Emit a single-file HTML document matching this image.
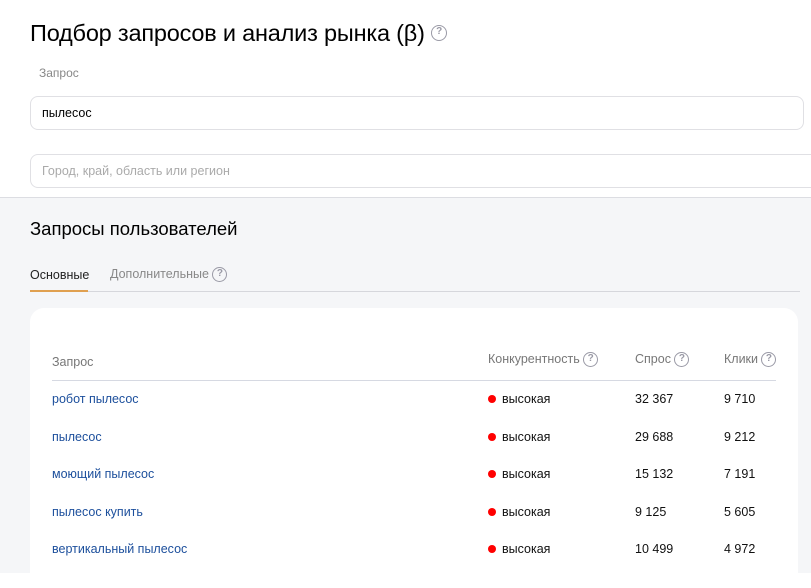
<!DOCTYPE html>
<html><head><meta charset="utf-8"><style>
*{box-sizing:border-box;margin:0;padding:0}
body{width:811px;height:573px;overflow:hidden;background:#fff;font-family:"Liberation Sans",sans-serif;color:#000;position:relative}
.abs{position:absolute;white-space:nowrap}
.q{display:inline-block;width:15px;height:15px;border:1.5px solid #9a9aa6;border-radius:50%;color:#9a9aa6;font-size:10px;line-height:12px;text-align:center;font-weight:bold;vertical-align:middle}
.inp{position:absolute;border:1px solid #e0e0e4;border-radius:8px;background:#fff}
.gray{position:absolute;left:0;top:197px;width:811px;height:376px;background:#f5f6f8;border-top:1px solid #dcdde2}
.card{position:absolute;left:30px;top:308px;width:768px;height:280px;background:#fff;border-radius:14px}
.lnk{color:#1c4f9c;font-size:12.5px}
.cell{font-size:12.5px;color:#111}
.dot{position:absolute;width:8px;height:8px;border-radius:50%;background:#f00}
</style></head><body>
<div class="abs" style="left:30px;top:20px;font-size:23.5px;letter-spacing:-0.2px">Подбор запросов и анализ рынка (β) <span class="q" style="width:16px;height:16px;position:relative;top:-2px">?</span></div>
<div class="abs" style="left:39px;top:66px;font-size:12px;color:#888">Запрос</div>
<div class="inp" style="left:30px;top:96px;width:774px;height:34px"></div>
<div class="abs" style="left:42px;top:106px;font-size:12.5px">пылесос</div>
<div class="inp" style="left:30px;top:154px;width:800px;height:34px"></div>
<div class="abs" style="left:42px;top:164px;font-size:12.5px;color:#aaa">Город, край, область или регион</div>
<div class="gray"></div>
<div class="abs" style="left:30px;top:218px;font-size:18.5px">Запросы пользователей</div>
<div class="abs" style="left:30px;top:268px;font-size:12.5px;color:#222">Основные</div>
<div class="abs" style="left:110px;top:267px;font-size:12.5px;color:#888">Дополнительные <span class="q">?</span></div>
<div class="abs" style="left:30px;top:291px;width:770px;height:1px;background:#d6d7dc"></div>
<div class="abs" style="left:30px;top:290px;width:58px;height:2px;background:#e0a050"></div>
<div class="card"></div>
<div class="abs" style="left:52px;top:355px;font-size:12.5px;color:#777">Запрос</div>
<div class="abs" style="left:488px;top:352px;font-size:12.5px;color:#777">Конкурентность <span class="q">?</span></div>
<div class="abs" style="left:635px;top:352px;font-size:12.5px;color:#777">Спрос <span class="q">?</span></div>
<div class="abs" style="left:724px;top:352px;font-size:12.5px;color:#777">Клики <span class="q">?</span></div>
<div class="abs" style="left:52px;top:380px;width:724px;height:1px;background:#d6d9e2"></div>

<div class="abs lnk" style="left:52px;top:392px">робот пылесос</div>
<div class="dot" style="left:488px;top:395px"></div><div class="abs cell" style="left:502px;top:392px">высокая</div>
<div class="abs cell" style="left:635px;top:392px">32 367</div><div class="abs cell" style="left:724px;top:392px">9 710</div>

<div class="abs lnk" style="left:52px;top:430px">пылесос</div>
<div class="dot" style="left:488px;top:433px"></div><div class="abs cell" style="left:502px;top:430px">высокая</div>
<div class="abs cell" style="left:635px;top:430px">29 688</div><div class="abs cell" style="left:724px;top:430px">9 212</div>

<div class="abs lnk" style="left:52px;top:467px">моющий пылесос</div>
<div class="dot" style="left:488px;top:470px"></div><div class="abs cell" style="left:502px;top:467px">высокая</div>
<div class="abs cell" style="left:635px;top:467px">15 132</div><div class="abs cell" style="left:724px;top:467px">7 191</div>

<div class="abs lnk" style="left:52px;top:505px">пылесос купить</div>
<div class="dot" style="left:488px;top:508px"></div><div class="abs cell" style="left:502px;top:505px">высокая</div>
<div class="abs cell" style="left:635px;top:505px">9 125</div><div class="abs cell" style="left:724px;top:505px">5 605</div>

<div class="abs lnk" style="left:52px;top:542px">вертикальный пылесос</div>
<div class="dot" style="left:488px;top:545px"></div><div class="abs cell" style="left:502px;top:542px">высокая</div>
<div class="abs cell" style="left:635px;top:542px">10 499</div><div class="abs cell" style="left:724px;top:542px">4 972</div>
</body></html>
